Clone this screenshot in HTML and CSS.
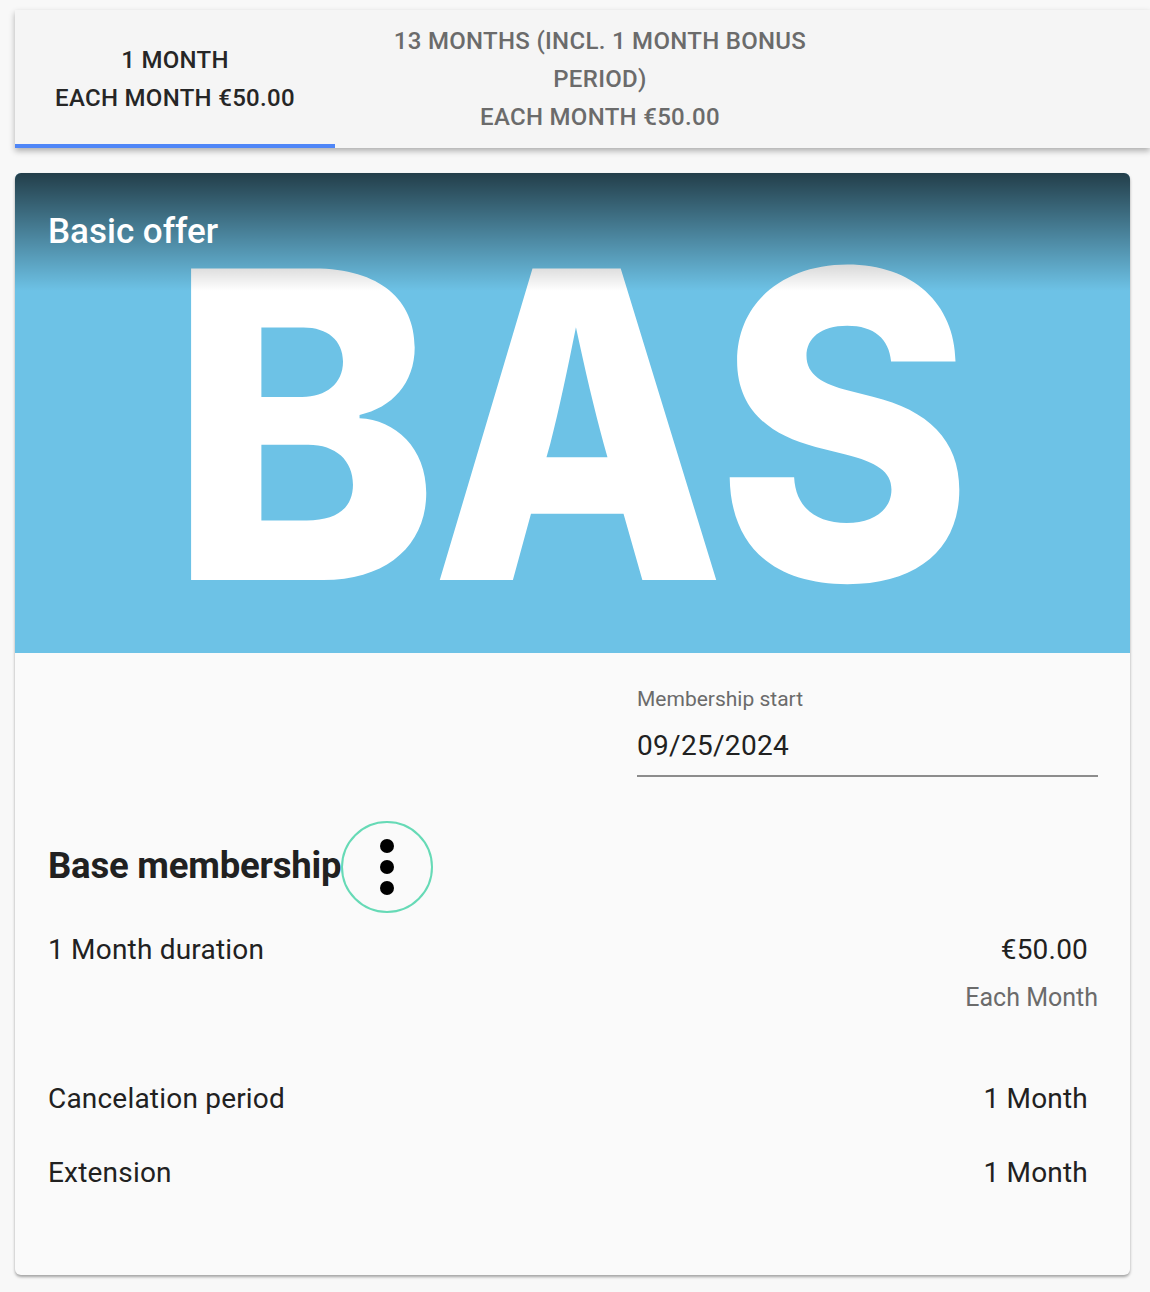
FILE: index.html
```html
<html>
<head>
  <meta name="viewport" content="width=device-width, initial-scale=1"/>
  <link rel="stylesheet" href="styles.css">
</head>
<body>
<div id="page">
  <div id="tabs">
    <div class="tab active">
      <span>1 Month</span>
      <span>Each month €50.00</span>
    </div>
    <div class="tab wide">
      <span>13 Months (incl. 1 month bonus period)</span>
      <span>Each month €50.00</span>
    </div>
  </div>

  <div id="offer">
    <div id="hero">
      <svg viewBox="0 0 1115 480" class="hero-art">
        <text x="153" y="407" textLength="271" lengthAdjust="spacingAndGlyphs">B</text>
        <text x="416" y="407" textLength="294" lengthAdjust="spacingAndGlyphs">A</text>
        <text x="701" y="407" textLength="257" lengthAdjust="spacingAndGlyphs">S</text>
      </svg>
      <div class="shade"></div>
      <h1>Basic offer</h1>
    </div>

    <div id="details">
      <div class="field">
        <div class="field-label">Membership start</div>
        <div class="field-value">09/25/2024</div>
      </div>

      <div class="section-head">
        <h2>Base membership</h2>
        <button class="kebab">
          <svg viewBox="0 0 92 92" width="92" height="92">
            <circle cx="46" cy="25" r="7"/>
            <circle cx="46" cy="46" r="7"/>
            <circle cx="46" cy="67" r="7"/>
          </svg>
        </button>
      </div>

      <div class="row first">
        <span>1 Month duration</span>
        <div class="price">
          <span class="value">€50.00</span>
          <span class="sub">Each Month</span>
        </div>
      </div>
      <div class="row gap-big">
        <span>Cancelation period</span>
        <span class="value">1 Month</span>
      </div>
      <div class="row gap-small">
        <span>Extension</span>
        <span class="value">1 Month</span>
      </div>
    </div>
  </div>
</div>
</body>
</html>
```

FILE: styles.css
```css
body {
  margin: 0;
  background: #f8f8f8;
  --fontfam: 'Roboto', 'Liberation Sans', sans-serif;
  font-family: var(--fontfam);
  color: #212121;
  --accent-color: #4f86f7;
}

#page {
  padding: 10px 0 18px 15px;
}

#tabs {
  display: flex;
  height: 138px;
  background: #f5f5f5;
  box-shadow: 0 3px 6px rgba(0, 0, 0, 0.3);
}

.tab {
  width: 320px;
  box-sizing: border-box;
  padding: 0 24px;
  display: flex;
  flex-direction: column;
  justify-content: center;
  align-items: center;
  text-align: center;
  font-size: 24px;
  font-weight: 500;
  line-height: 38px;
  letter-spacing: 0.3px;
  text-transform: uppercase;
  color: #6b6b6b;
}

.tab.wide {
  width: 530px;
}

.tab.active {
  color: #262626;
  box-shadow: inset 0 -4px 0 var(--accent-color);
}

#offer {
  margin: 25px 20px 0 0;
  border-radius: 6px;
  overflow: hidden;
  background: #fafafa;
  box-shadow: 0 2px 3px rgba(0, 0, 0, 0.35);
}

#hero {
  position: relative;
  height: 480px;
  background: #6dc2e6;
}

.hero-art {
  display: block;
  width: 100%;
  height: 100%;
}

.hero-art text {
  font-family: 'Inter', 'Open Sans', sans-serif;
  font-weight: 800;
  font-size: 428px;
  fill: #fff;
}

.shade {
  position: absolute;
  top: 0;
  left: 0;
  right: 0;
  height: 118px;
  background: linear-gradient(to bottom, rgba(0, 0, 0, 0.68), rgba(0, 0, 0, 0));
}

#hero h1 {
  position: absolute;
  top: 38px;
  left: 33px;
  margin: 0;
  font-size: 35px;
  font-weight: 500;
  line-height: 42px;
  color: #fff;
}

#details {
  padding: 34px 32px 86px 33px;
}

.field {
  width: 461px;
  margin-left: auto;
  padding-bottom: 12px;
  border-bottom: 2px solid #8c8c8c;
}

.field-label {
  font-size: 21px;
  line-height: 24px;
  color: #6b6b6b;
}

.field-value {
  margin-top: 18px;
  font-size: 28px;
  line-height: 34px;
  letter-spacing: 0.3px;
}

.section-head {
  display: flex;
  align-items: center;
  margin-top: 44px;
}

.section-head h2 {
  margin: 0 0 4px;
  font-size: 36.5px;
  font-weight: 700;
  letter-spacing: -0.2px;
}

.kebab {
  width: 92px;
  height: 92px;
  padding: 0;
  border: 2px solid #66dab6;
  border-radius: 50%;
  background: none;
  display: flex;
  align-items: center;
  justify-content: center;
}

.kebab svg {
  flex: none;
  fill: #000;
}

.row {
  display: flex;
  justify-content: space-between;
  align-items: flex-start;
  font-size: 28px;
  line-height: 32px;
  letter-spacing: 0.2px;
}

.row.first {
  margin-top: 21px;
}

.row.gap-big {
  margin-top: 69px;
}

.row.gap-small {
  margin-top: 42px;
}

.price {
  display: flex;
  flex-direction: column;
  align-items: flex-end;
}

.value {
  padding-right: 10px;
}

.sub {
  margin-top: 16px;
  font-size: 25px;
  letter-spacing: 0;
  color: #6b6b6b;
}
```
